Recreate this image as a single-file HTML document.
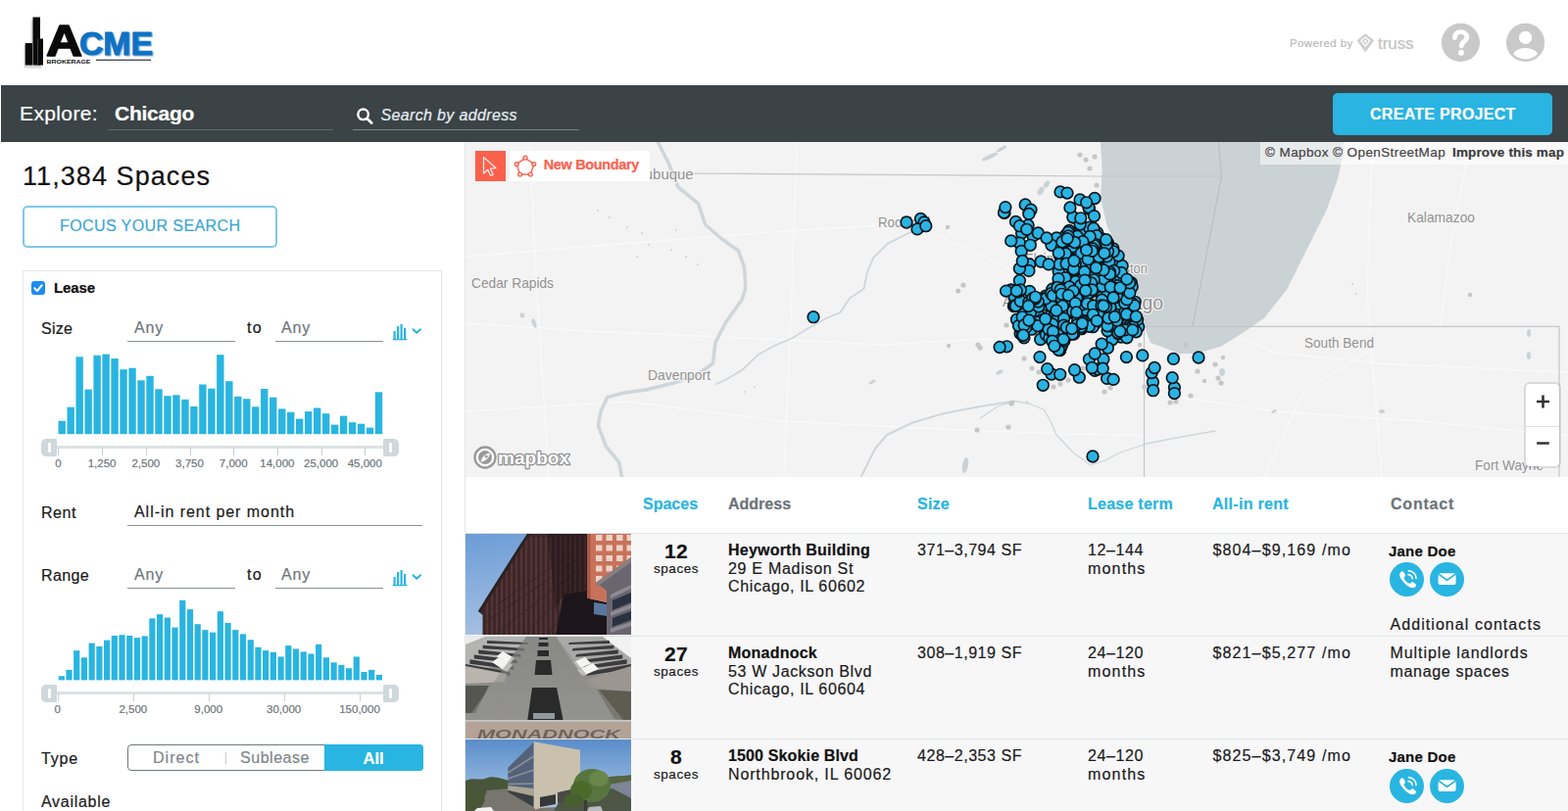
<!DOCTYPE html>
<html lang="en"><head><meta charset="utf-8"><title>Explore Chicago</title>
<style>
html,body{margin:0;padding:0;}
body{width:1600px;height:828px;overflow:hidden;background:#fff;font-family:"Liberation Sans", sans-serif;position:relative;}
.t{position:absolute;white-space:pre;-webkit-text-stroke:0.2px currentColor;}
.a{position:absolute;}

#bar{left:1px;top:87px;width:1599px;height:57.5px;background:#3b4346;}
#create{left:1360px;top:95px;width:224px;height:43px;background:#29b4e2;border-radius:5px;}
.ul{position:absolute;height:1.6px;}

#lp-border{left:474px;top:145px;width:1px;height:683px;background:#e4e7e9;}
#focus{left:23px;top:210px;width:256px;height:39px;border:2px solid #7fc8e4;border-radius:5px;}
#fbox{left:23px;top:276px;width:426px;height:600px;border:1px solid #e3e7ea;}
.iul{position:absolute;height:1.3px;background:#8a9195;}
.tick{position:absolute;width:1px;background:#c9cfd2;}
.hd{position:absolute;width:16px;height:18px;background:#cfd8dc;border-radius:3px;}
.hd i{position:absolute;left:6.5px;top:4px;width:3px;height:10px;background:#fff;border-radius:1px;}
.trk{position:absolute;height:3px;background:#dde2e4;}

#map{left:475px;top:145px;width:1125px;height:342px;overflow:hidden;background:#f3f3f3;}
#map text{font-family:"Liberation Sans",sans-serif;}

.row{position:absolute;left:475px;width:1125px;background:#f7f7f8;border-top:1px solid #e2e5e8;}
.ic{position:absolute;width:35px;height:35px;border-radius:50%;background:#29b5e1;}

</style></head><body>

<div class="a" id="logo" style="left:18px;top:14px;width:150px;height:60px;">
<svg width="150" height="60" viewBox="0 0 150 60">
 <g fill="#c9c9c9" opacity=".7" transform="translate(-1.5,1.5)"><rect x="15" y="5" width="8" height="49"/><rect x="8" y="30" width="8" height="24"/><rect x="21" y="25" width="5" height="29"/></g>
 <rect x="15.5" y="3.5" width="7.5" height="49" fill="#0a0a0a"/>
 <rect x="7.7" y="30" width="7.3" height="22.5" fill="#0a0a0a"/>
 <rect x="20.6" y="25.5" width="5.4" height="27" fill="#0a0a0a"/><rect x="20" y="25.5" width=".7" height="27" fill="#555"/>
 <text x="29" y="43" font-family="Liberation Sans, sans-serif" font-weight="700" font-size="45" fill="#c4c4c4" transform="translate(1.2,1.2)" textLength="37" lengthAdjust="spacingAndGlyphs">A</text>
 <text x="29" y="43" font-family="Liberation Sans, sans-serif" font-weight="700" font-size="45" fill="#0a0a0a" stroke="#0a0a0a" stroke-width="1.6" stroke-linejoin="round" textLength="37" lengthAdjust="spacingAndGlyphs">A</text>
 <text x="63" y="41.5" font-family="Liberation Sans, sans-serif" font-weight="700" font-size="32.5" fill="#9db9d6" stroke="#9db9d6" stroke-width="1" transform="translate(1.2,1.2)" textLength="75" lengthAdjust="spacingAndGlyphs">CME</text>
 <text x="63" y="41.5" font-family="Liberation Sans, sans-serif" font-weight="700" font-size="32.5" fill="#0e72c4" stroke="#0e72c4" stroke-width="1" stroke-linejoin="round" textLength="75" lengthAdjust="spacingAndGlyphs">CME</text>
 <text x="29.5" y="50.5" font-family="Liberation Sans, sans-serif" font-weight="700" font-size="5.6" fill="#111" textLength="45" lengthAdjust="spacingAndGlyphs">BROKERAGE</text>
 <rect x="80" y="46.6" width="56" height="1.4" fill="#4a4f57"/>
</svg></div>
<div class="a" id="bar"></div>
<div class="ul" style="left:110px;top:131.5px;width:230px;background:#5d666a;"></div>
<div class="ul" style="left:360px;top:131.5px;width:231px;background:#7a8387;"></div>
<svg class="a" style="left:362px;top:108px" width="20" height="20" viewBox="0 0 20 20"><circle cx="8.6" cy="8.8" r="5.3" fill="none" stroke="#fff" stroke-width="2.4"/><path d="M12.6 12.9 L17.2 17.5" stroke="#fff" stroke-width="2.8" stroke-linecap="round"/></svg>
<div class="a" id="create"></div>
<!-- powered by truss -->
<svg class="a" style="left:1383px;top:33px" width="21" height="22" viewBox="0 0 21 22"><path d="M10.2 1.2 L19.2 8.2 L10.2 20.6 L1.4 8.2 Z" fill="#cfcfcf"/><path d="M10.2 5 L14.6 8.6 L10.2 14.2 L5.8 8.6 Z" fill="none" stroke="#fff" stroke-width="1.3"/><circle cx="10.2" cy="9.2" r="1.3" fill="#fff"/></svg>
<svg class="a" style="left:1470px;top:23px" width="41" height="41" viewBox="0 0 41 41"><circle cx="20.4" cy="20.4" r="19.6" fill="#c9c9c9"/><path d="M14.4 15.6 C14.4 11.4 17.2 9.6 20.6 9.6 C24.2 9.6 26.8 11.6 26.8 14.8 C26.8 19.4 21.2 19.2 21.2 24" fill="none" stroke="#fff" stroke-width="4.8" stroke-linecap="round"/><circle cx="21" cy="30.8" r="3" fill="#fff"/></svg>
<svg class="a" style="left:1536px;top:23px" width="41" height="41" viewBox="0 0 41 41"><defs><clipPath id="uc"><circle cx="20.6" cy="20.4" r="17"/></clipPath></defs><circle cx="20.6" cy="20.4" r="19.6" fill="#c9c9c9"/><circle cx="20.6" cy="15.4" r="6.6" fill="#fff"/><ellipse cx="20.6" cy="33.5" rx="12.6" ry="7.4" fill="#fff" clip-path="url(#uc)"/></svg>


<div class="a" id="lp-border"></div>
<div class="a" id="focus"></div>
<div class="a" id="fbox"></div>
<svg class="a" style="left:32px;top:287px" width="14" height="14" viewBox="0 0 14 14"><rect x="0" y="0" width="14" height="14" rx="3" fill="#1a8cf0"/><path d="M3.2 7.2 L6 10 L10.8 4.2" fill="none" stroke="#fff" stroke-width="2" stroke-linecap="round" stroke-linejoin="round"/></svg>
<div class="iul" style="left:130px;top:348px;width:110px"></div>
<div class="iul" style="left:280.5px;top:348px;width:110px"></div>
<div class="iul" style="left:130px;top:535.5px;width:301px"></div>
<div class="iul" style="left:130px;top:599.5px;width:110px"></div>
<div class="iul" style="left:280.5px;top:599.5px;width:110px"></div>
<svg class="a" style="left:401px;top:329.5px" width="32" height="18" viewBox="0 0 32 18"><g fill="#29b5e1"><rect x="0.5" y="8" width="2.2" height="8"/><rect x="4" y="3" width="2.2" height="13"/><rect x="7.5" y="1" width="2.2" height="15"/><rect x="11" y="5" width="2.2" height="11"/><rect x="0" y="16" width="14.5" height="1.3"/></g><path d="M20.5 6.2 L24.2 9.8 L28 6.2" fill="none" stroke="#29b5e1" stroke-width="2" stroke-linecap="round" stroke-linejoin="round"/></svg>
<svg class="a" style="left:401px;top:581px" width="32" height="18" viewBox="0 0 32 18"><g fill="#29b5e1"><rect x="0.5" y="8" width="2.2" height="8"/><rect x="4" y="3" width="2.2" height="13"/><rect x="7.5" y="1" width="2.2" height="15"/><rect x="11" y="5" width="2.2" height="11"/><rect x="0" y="16" width="14.5" height="1.3"/></g><path d="M20.5 6.2 L24.2 9.8 L28 6.2" fill="none" stroke="#29b5e1" stroke-width="2" stroke-linecap="round" stroke-linejoin="round"/></svg>
<svg class="a" style="left:0;top:0" width="474" height="828"><g fill="#29b5e1"><rect x="59.50" y="429.70" width="7.4" height="13.50"/><rect x="68.48" y="415.60" width="7.4" height="27.60"/><rect x="77.46" y="364.29" width="7.4" height="78.91"/><rect x="86.44" y="397.60" width="7.4" height="45.60"/><rect x="95.42" y="362.79" width="7.4" height="80.41"/><rect x="104.40" y="361.59" width="7.4" height="81.61"/><rect x="113.38" y="366.09" width="7.4" height="77.11"/><rect x="122.36" y="377.19" width="7.4" height="66.01"/><rect x="131.34" y="375.69" width="7.4" height="67.51"/><rect x="140.32" y="388.29" width="7.4" height="54.91"/><rect x="149.31" y="383.79" width="7.4" height="59.41"/><rect x="158.29" y="397.30" width="7.4" height="45.90"/><rect x="167.27" y="404.20" width="7.4" height="39.00"/><rect x="176.25" y="403.30" width="7.4" height="39.90"/><rect x="185.23" y="407.80" width="7.4" height="35.40"/><rect x="194.21" y="415.00" width="7.4" height="28.20"/><rect x="203.19" y="392.49" width="7.4" height="50.71"/><rect x="212.17" y="396.70" width="7.4" height="46.50"/><rect x="221.15" y="362.19" width="7.4" height="81.01"/><rect x="230.13" y="389.19" width="7.4" height="54.01"/><rect x="239.11" y="404.80" width="7.4" height="38.40"/><rect x="248.09" y="407.20" width="7.4" height="36.00"/><rect x="257.07" y="415.30" width="7.4" height="27.90"/><rect x="266.05" y="397.00" width="7.4" height="46.20"/><rect x="275.03" y="405.70" width="7.4" height="37.50"/><rect x="284.01" y="417.40" width="7.4" height="25.80"/><rect x="292.99" y="420.70" width="7.4" height="22.50"/><rect x="301.98" y="427.60" width="7.4" height="15.60"/><rect x="310.96" y="420.10" width="7.4" height="23.10"/><rect x="319.94" y="416.50" width="7.4" height="26.70"/><rect x="328.92" y="422.20" width="7.4" height="21.00"/><rect x="337.90" y="433.60" width="7.4" height="9.60"/><rect x="346.88" y="424.60" width="7.4" height="18.60"/><rect x="355.86" y="431.20" width="7.4" height="12.00"/><rect x="364.84" y="432.70" width="7.4" height="10.50"/><rect x="373.82" y="436.60" width="7.4" height="6.60"/><rect x="382.80" y="400.30" width="7.4" height="42.90"/><rect x="59.70" y="690.20" width="6.2" height="4.20"/><rect x="67.42" y="683.89" width="6.2" height="10.51"/><rect x="75.13" y="664.14" width="6.2" height="30.26"/><rect x="82.85" y="671.28" width="6.2" height="23.12"/><rect x="90.57" y="656.57" width="6.2" height="37.83"/><rect x="98.28" y="659.93" width="6.2" height="34.47"/><rect x="106.00" y="653.63" width="6.2" height="40.77"/><rect x="113.72" y="649.00" width="6.2" height="45.40"/><rect x="121.43" y="648.16" width="6.2" height="46.24"/><rect x="129.15" y="649.00" width="6.2" height="45.40"/><rect x="136.87" y="651.10" width="6.2" height="43.30"/><rect x="144.58" y="649.42" width="6.2" height="44.98"/><rect x="152.30" y="631.35" width="6.2" height="63.05"/><rect x="160.02" y="627.14" width="6.2" height="67.26"/><rect x="167.73" y="630.51" width="6.2" height="63.89"/><rect x="175.45" y="640.60" width="6.2" height="53.80"/><rect x="183.17" y="612.85" width="6.2" height="81.55"/><rect x="190.88" y="622.10" width="6.2" height="72.30"/><rect x="198.60" y="637.23" width="6.2" height="57.17"/><rect x="206.32" y="643.12" width="6.2" height="51.28"/><rect x="214.03" y="645.64" width="6.2" height="48.76"/><rect x="221.75" y="624.20" width="6.2" height="70.20"/><rect x="229.47" y="635.97" width="6.2" height="58.43"/><rect x="237.18" y="643.12" width="6.2" height="51.28"/><rect x="244.90" y="647.32" width="6.2" height="47.08"/><rect x="252.62" y="653.21" width="6.2" height="41.19"/><rect x="260.33" y="660.77" width="6.2" height="33.63"/><rect x="268.05" y="664.14" width="6.2" height="30.26"/><rect x="275.77" y="665.82" width="6.2" height="28.58"/><rect x="283.48" y="670.44" width="6.2" height="23.96"/><rect x="291.20" y="659.09" width="6.2" height="35.31"/><rect x="298.92" y="662.45" width="6.2" height="31.95"/><rect x="306.63" y="665.40" width="6.2" height="29.00"/><rect x="314.35" y="667.50" width="6.2" height="26.90"/><rect x="322.07" y="657.83" width="6.2" height="36.57"/><rect x="329.78" y="671.28" width="6.2" height="23.12"/><rect x="337.50" y="676.33" width="6.2" height="18.07"/><rect x="345.22" y="678.85" width="6.2" height="15.55"/><rect x="352.93" y="682.21" width="6.2" height="12.19"/><rect x="360.65" y="670.44" width="6.2" height="23.96"/><rect x="368.37" y="685.99" width="6.2" height="8.41"/><rect x="376.08" y="683.89" width="6.2" height="10.51"/><rect x="383.80" y="688.94" width="6.2" height="5.46"/></g></svg>
<div class="trk" style="left:50px;top:455px;width:350px"></div>
<div class="trk" style="left:50px;top:706px;width:350px"></div>
<div class="tick" style="left:59.4px;top:457px;height:8px"></div><div class="tick" style="left:104.1px;top:457px;height:8px"></div><div class="tick" style="left:148.8px;top:457px;height:8px"></div><div class="tick" style="left:193.5px;top:457px;height:8px"></div><div class="tick" style="left:238.2px;top:457px;height:8px"></div><div class="tick" style="left:282.9px;top:457px;height:8px"></div><div class="tick" style="left:327.6px;top:457px;height:8px"></div><div class="tick" style="left:372.3px;top:457px;height:8px"></div><div class="tick" style="left:58.8px;top:708px;height:8px"></div><div class="tick" style="left:135.8px;top:708px;height:8px"></div><div class="tick" style="left:212.7px;top:708px;height:8px"></div><div class="tick" style="left:289.6px;top:708px;height:8px"></div><div class="tick" style="left:367.0px;top:708px;height:8px"></div>
<div class="hd" style="left:42px;top:447.5px;border-radius:5px 1px 1px 5px"><i></i></div>
<div class="hd" style="left:390.5px;top:447.5px;border-radius:1px 5px 5px 1px"><i></i></div>
<div class="hd" style="left:42px;top:698.5px;border-radius:5px 1px 1px 5px"><i></i></div>
<div class="hd" style="left:390.5px;top:698.5px;border-radius:1px 5px 5px 1px"><i></i></div>
<div class="a" style="left:130px;top:760px;width:300px;height:25px;border:1px solid #6f787c;border-radius:4px;"></div>
<div class="a" style="left:331px;top:760px;width:100.5px;height:27px;background:#29b5e1;border-radius:0 4px 4px 0;"></div>
<div class="a" style="left:230px;top:768px;width:1px;height:12px;background:#c5cbce;"></div>


<div class="a" id="map">
<svg width="1125" height="342" viewBox="0 0 1125 342">
<g fill="none" stroke="#f9f9f9" stroke-width="1.3"><polyline points="0.0,185.0 125.0,193.0 285.0,200.0 425.0,207.0 555.0,200.0"/><polyline points="0.0,117.0 145.0,105.0 325.0,91.0 455.0,83.0"/><polyline points="65.0,0.0 73.0,155.0 85.0,342.0"/><polyline points="338.0,0.0 333.0,155.0 325.0,342.0"/><polyline points="765.0,188.0 825.0,215.0 945.0,227.0 1125.0,235.0"/><polyline points="925.0,0.0 920.0,155.0 935.0,342.0"/><polyline points="695.0,255.0 825.0,275.0 975.0,285.0 1125.0,300.0"/><polyline points="455.0,83.0 525.0,115.0 585.0,145.0"/><polyline points="815.0,342.0 855.0,255.0 925.0,211.0"/><polyline points="0.0,275.0 165.0,265.0 325.0,285.0 525.0,295.0 695.0,300.0"/><polyline points="1025.0,0.0 1005.0,105.0 995.0,188.0"/></g>
<polygon points="648.0,0.0 649.6,29.0 648.0,58.0 655.0,87.0 670.0,116.0 681.5,145.0 690.0,174.0 695.0,195.0 699.0,205.0 710.5,209.0 728.0,216.0 745.0,216.0 771.0,208.7 794.5,194.0 815.0,179.7 838.0,150.7 852.5,121.7 867.0,92.8 878.6,69.6 890.0,37.7 894.6,17.4 896.0,0.0" fill="#cbd2d6"/>
<g fill="#cbd2d6"><ellipse cx="535" cy="15" rx="9" ry="2.2" transform="rotate(-25 535 15)"/><ellipse cx="547" cy="7" rx="6" ry="1.8" transform="rotate(-30 547 7)"/><ellipse cx="587" cy="50" rx="3" ry="5" transform="rotate(30 587 50)"/><ellipse cx="593" cy="43" rx="2.5" ry="4" transform="rotate(30 593 43)"/><ellipse cx="58" cy="177" rx="2.5" ry="2.5" transform="rotate(0 58 177)"/><ellipse cx="70" cy="185" rx="2" ry="5" transform="rotate(-20 70 185)"/><ellipse cx="415" cy="245" rx="4" ry="1.5" transform="rotate(-30 415 245)"/><ellipse cx="880" cy="42" rx="4" ry="1.5" transform="rotate(-30 880 42)"/><ellipse cx="845" cy="27" rx="3" ry="1.2" transform="rotate(-30 845 27)"/><ellipse cx="825" cy="120" rx="3" ry="1.2" transform="rotate(-30 825 120)"/><ellipse cx="1085" cy="195" rx="2" ry="4" transform="rotate(0 1085 195)"/><ellipse cx="1085" cy="218" rx="2" ry="4" transform="rotate(0 1085 218)"/><ellipse cx="825" cy="275" rx="3" ry="1.5" transform="rotate(-30 825 275)"/><ellipse cx="935" cy="275" rx="3" ry="2" transform="rotate(0 935 275)"/><ellipse cx="545" cy="235" rx="4" ry="2" transform="rotate(-30 545 235)"/><ellipse cx="510" cy="330" rx="3" ry="8" transform="rotate(10 510 330)"/><ellipse cx="1012" cy="15" rx="2" ry="4" transform="rotate(-20 1012 15)"/><ellipse cx="772" cy="235" rx="3" ry="4" transform="rotate(0 772 235)"/><circle cx="135" cy="70" r="1"/><circle cx="147" cy="77" r="1"/><circle cx="165" cy="87" r="1"/><circle cx="180" cy="93" r="1"/><circle cx="187" cy="105" r="1"/><circle cx="175" cy="117" r="1"/><circle cx="210" cy="110" r="1"/><circle cx="225" cy="117" r="1"/><circle cx="237" cy="125" r="1"/><circle cx="215" cy="90" r="1"/><circle cx="573" cy="265" r="1"/><circle cx="285" cy="255" r="1"/><circle cx="295" cy="250" r="1"/><circle cx="905" cy="145" r="1"/><circle cx="909" cy="155" r="1"/></g>
<g fill="none" stroke="#cfd6da" stroke-linejoin="round" stroke-linecap="round">
<polyline points="196.4,0.0 207.3,21.7 217.0,46.0 237.5,62.8 244.7,84.5 261.6,99.0 278.5,111.0 284.6,128.0 285.8,149.7 282.0,161.0 266.0,183.5 255.0,204.7 252.5,226.0 237.0,237.0 212.6,246.0 186.0,252.6 159.5,256.5 144.8,260.5 138.0,275.0 135.5,289.8 143.5,311.0 156.8,327.0 159.5,342.0" stroke-width="3.6"/>
<polyline points="462.0,88.0 450.0,94.0 430.7,103.9 416.0,118.4 410.0,132.8 406.5,149.7 392.0,159.4 382.4,174.0 368.0,180.0 348.6,190.8 334.0,200.0 315.0,208.0 299.0,217.0 282.0,233.0 265.0,243.0 256.0,247.0" stroke-width="1.8"/>
<polyline points="560.0,264.5 525.0,270.0 486.0,277.6 455.0,287.0 430.0,299.0 418.0,313.0 412.0,325.0 403.7,342.0" stroke-width="2"/>
<polyline points="525.0,282.0 543.0,270.0 560.0,264.6 575.0,267.0 590.0,273.0 597.0,285.0 603.0,299.0 620.0,317.0 638.0,330.0 653.0,325.0 668.0,317.0 695.0,308.0 725.0,302.0 765.0,295.0" stroke-width="1.3"/>
</g>
<g fill="none" stroke="#c3c6c8" stroke-width="1.2">
<polyline points="215.0,32.0 425.0,33.3 648.0,35.0 771.4,35.0"/>
<polyline points="768.5,0.0 771.4,35.0 742.0,188.4" stroke="#b4bcc0" stroke-width="1"/>
<polyline points="692.5,342.0 692.5,188.4 1116.0,188.4 1116.0,342.0"/>
</g>
<g fill="#c6c6c6"><circle cx="642.0" cy="15.0" r="2.6"/><circle cx="633.0" cy="18.0" r="2.6"/><circle cx="627.0" cy="13.0" r="2.6"/><circle cx="637.0" cy="27.0" r="2.6"/><circle cx="644.0" cy="44.0" r="2.6"/><circle cx="552.0" cy="187.0" r="2.6"/><circle cx="562.0" cy="107.0" r="2.6"/><circle cx="594.0" cy="162.0" r="2.6"/><circle cx="600.0" cy="160.0" r="2.6"/><circle cx="508.0" cy="146.0" r="2.6"/><circle cx="502.7" cy="152.0" r="2.6"/><circle cx="523.0" cy="207.0" r="2.6"/><circle cx="525.0" cy="210.0" r="2.6"/><circle cx="557.0" cy="267.0" r="2.6"/><circle cx="554.0" cy="291.0" r="2.6"/><circle cx="765.0" cy="227.0" r="2.6"/><circle cx="768.0" cy="241.0" r="2.6"/><circle cx="771.0" cy="246.0" r="2.6"/><circle cx="747.0" cy="234.0" r="2.6"/><circle cx="740.0" cy="259.0" r="2.6"/><circle cx="725.0" cy="265.0" r="2.6"/><circle cx="719.0" cy="266.0" r="2.6"/><circle cx="578.0" cy="231.0" r="2.6"/><circle cx="585.0" cy="235.0" r="2.6"/><circle cx="593.0" cy="234.0" r="2.6"/><circle cx="600.0" cy="250.0" r="2.6"/><circle cx="607.0" cy="247.0" r="2.6"/><circle cx="615.0" cy="243.0" r="2.6"/><circle cx="623.0" cy="237.0" r="2.6"/><circle cx="630.0" cy="231.0" r="2.6"/><circle cx="645.0" cy="233.0" r="2.6"/><circle cx="657.0" cy="237.0" r="2.6"/><circle cx="665.0" cy="243.0" r="2.6"/><circle cx="658.0" cy="251.0" r="2.6"/><circle cx="652.0" cy="255.0" r="2.6"/><circle cx="570.0" cy="221.0" r="2.6"/><circle cx="735.0" cy="207.0" r="2.6"/><circle cx="700.0" cy="227.0" r="2.6"/><circle cx="693.0" cy="250.0" r="2.6"/><circle cx="522.0" cy="294.0" r="2.6"/><circle cx="610.0" cy="181.0" r="2.6"/><circle cx="492.0" cy="87.0" r="2.2"/><circle cx="493.0" cy="208.0" r="2.2"/><circle cx="558.0" cy="266.0" r="2.2"/><circle cx="688.0" cy="207.0" r="2.2"/><circle cx="773.0" cy="220.0" r="2.2"/><circle cx="754.0" cy="244.0" r="2.2"/><circle cx="1025.0" cy="156.0" r="2.2"/></g>
<text x="172.0" y="38.0" font-size="14.5" fill="#929292" font-weight="400" stroke="#f6f6f6" stroke-width="2.2" paint-order="stroke" stroke-linejoin="round" textLength="60.6" lengthAdjust="spacingAndGlyphs">Dubuque</text><text x="6.0" y="149.0" font-size="14.5" fill="#929292" font-weight="400" stroke="#f6f6f6" stroke-width="2.2" paint-order="stroke" stroke-linejoin="round" textLength="84.0" lengthAdjust="spacingAndGlyphs">Cedar Rapids</text><text x="186.0" y="243.0" font-size="14.5" fill="#929292" font-weight="400" stroke="#f6f6f6" stroke-width="2.2" paint-order="stroke" stroke-linejoin="round" textLength="64.0" lengthAdjust="spacingAndGlyphs">Davenport</text><text x="421.0" y="87.0" font-size="14.5" fill="#929292" font-weight="400" stroke="#f6f6f6" stroke-width="2.2" paint-order="stroke" stroke-linejoin="round" textLength="53.0" lengthAdjust="spacingAndGlyphs">Rockford</text><text x="961.0" y="82.0" font-size="14.5" fill="#929292" font-weight="400" stroke="#f6f6f6" stroke-width="2.2" paint-order="stroke" stroke-linejoin="round" textLength="69.0" lengthAdjust="spacingAndGlyphs">Kalamazoo</text><text x="856.0" y="209.5" font-size="14.5" fill="#929292" font-weight="400" stroke="#f6f6f6" stroke-width="2.2" paint-order="stroke" stroke-linejoin="round" textLength="71.0" lengthAdjust="spacingAndGlyphs">South Bend</text><text x="1030.0" y="334.5" font-size="14.5" fill="#929292" font-weight="400" stroke="#f6f6f6" stroke-width="2.2" paint-order="stroke" stroke-linejoin="round" textLength="70.0" lengthAdjust="spacingAndGlyphs">Fort Wayne</text><text x="641.0" y="171.0" font-size="19.5" fill="#929292" font-weight="400" stroke="#f6f6f6" stroke-width="2.2" paint-order="stroke" stroke-linejoin="round" textLength="71.0" lengthAdjust="spacingAndGlyphs">Chicago</text><text x="642.0" y="133.5" font-size="14.5" fill="#929292" font-weight="400" stroke="#f6f6f6" stroke-width="2.2" paint-order="stroke" stroke-linejoin="round" textLength="54.0" lengthAdjust="spacingAndGlyphs">Evanston</text><text x="548.0" y="167.5" font-size="14.5" fill="#929292" font-weight="400" stroke="#f6f6f6" stroke-width="2.2" paint-order="stroke" stroke-linejoin="round" textLength="39.0" lengthAdjust="spacingAndGlyphs">Aurora</text><text x="571.0" y="124.0" font-size="14.5" fill="#929292" font-weight="400" stroke="#f6f6f6" stroke-width="2.2" paint-order="stroke" stroke-linejoin="round" textLength="29.0" lengthAdjust="spacingAndGlyphs">Elgin</text>
<g fill="#2ab3e3" stroke="#08161c" stroke-width="1.7"><circle cx="686.7" cy="188.8" r="5.8"/><circle cx="625.7" cy="106.4" r="5.8"/><circle cx="608.1" cy="176.2" r="5.8"/><circle cx="576.8" cy="165.3" r="5.8"/><circle cx="644.7" cy="92.6" r="5.8"/><circle cx="591.3" cy="193.3" r="5.8"/><circle cx="586.7" cy="201.5" r="5.8"/><circle cx="606.6" cy="212.5" r="5.8"/><circle cx="602.9" cy="189.0" r="5.8"/><circle cx="598.8" cy="150.2" r="5.8"/><circle cx="661.1" cy="176.5" r="5.8"/><circle cx="556.7" cy="150.9" r="5.8"/><circle cx="604.7" cy="145.7" r="5.8"/><circle cx="592.0" cy="166.1" r="5.8"/><circle cx="572.1" cy="176.7" r="5.8"/><circle cx="603.9" cy="185.6" r="5.8"/><circle cx="607.5" cy="147.3" r="5.8"/><circle cx="669.3" cy="150.6" r="5.8"/><circle cx="642.2" cy="233.4" r="5.8"/><circle cx="649.5" cy="161.5" r="5.8"/><circle cx="608.9" cy="170.5" r="5.8"/><circle cx="603.7" cy="209.4" r="5.8"/><circle cx="667.8" cy="137.7" r="5.8"/><circle cx="611.3" cy="100.6" r="5.8"/><circle cx="628.6" cy="132.2" r="5.8"/><circle cx="675.6" cy="172.2" r="5.8"/><circle cx="619.4" cy="102.2" r="5.8"/><circle cx="642.1" cy="185.9" r="5.8"/><circle cx="628.5" cy="190.7" r="5.8"/><circle cx="594.8" cy="162.8" r="5.8"/><circle cx="633.4" cy="104.6" r="5.8"/><circle cx="643.9" cy="127.6" r="5.8"/><circle cx="621.6" cy="145.3" r="5.8"/><circle cx="672.7" cy="192.0" r="5.8"/><circle cx="666.4" cy="167.0" r="5.8"/><circle cx="597.1" cy="195.6" r="5.8"/><circle cx="638.6" cy="153.0" r="5.8"/><circle cx="748.0" cy="220.0" r="5.8"/><circle cx="629.3" cy="125.8" r="5.8"/><circle cx="646.7" cy="101.8" r="5.8"/><circle cx="636.4" cy="68.3" r="5.8"/><circle cx="616.0" cy="90.5" r="5.8"/><circle cx="566.9" cy="194.8" r="5.8"/><circle cx="618.7" cy="147.2" r="5.8"/><circle cx="637.4" cy="137.7" r="5.8"/><circle cx="723.4" cy="250.8" r="5.8"/><circle cx="639.5" cy="135.6" r="5.8"/><circle cx="620.5" cy="77.0" r="5.8"/><circle cx="668.8" cy="199.0" r="5.8"/><circle cx="580.0" cy="187.6" r="5.8"/><circle cx="572.5" cy="169.9" r="5.8"/><circle cx="660.0" cy="164.5" r="5.8"/><circle cx="605.9" cy="203.0" r="5.8"/><circle cx="679.4" cy="143.6" r="5.8"/><circle cx="647.4" cy="175.5" r="5.8"/><circle cx="664.3" cy="154.5" r="5.8"/><circle cx="564.7" cy="166.7" r="5.8"/><circle cx="674.1" cy="152.2" r="5.8"/><circle cx="627.0" cy="89.3" r="5.8"/><circle cx="643.4" cy="118.6" r="5.8"/><circle cx="574.6" cy="175.5" r="5.8"/><circle cx="636.0" cy="173.3" r="5.8"/><circle cx="624.7" cy="184.4" r="5.8"/><circle cx="677.8" cy="150.7" r="5.8"/><circle cx="627.2" cy="93.1" r="5.8"/><circle cx="608.9" cy="163.8" r="5.8"/><circle cx="671.2" cy="141.5" r="5.8"/><circle cx="560.9" cy="156.2" r="5.8"/><circle cx="639.1" cy="119.4" r="5.8"/><circle cx="616.1" cy="171.3" r="5.8"/><circle cx="658.9" cy="186.3" r="5.8"/><circle cx="565.9" cy="150.9" r="5.8"/><circle cx="621.8" cy="175.4" r="5.8"/><circle cx="620.5" cy="137.9" r="5.8"/><circle cx="607.5" cy="147.9" r="5.8"/><circle cx="596.4" cy="195.7" r="5.8"/><circle cx="614.8" cy="105.0" r="5.8"/><circle cx="599.5" cy="196.4" r="5.8"/><circle cx="630.0" cy="129.1" r="5.8"/><circle cx="630.6" cy="176.6" r="5.8"/><circle cx="630.0" cy="117.4" r="5.8"/><circle cx="656.3" cy="140.6" r="5.8"/><circle cx="619.1" cy="130.5" r="5.8"/><circle cx="600.4" cy="157.1" r="5.8"/><circle cx="612.6" cy="118.8" r="5.8"/><circle cx="621.8" cy="167.7" r="5.8"/><circle cx="571.2" cy="64.0" r="5.8"/><circle cx="655.3" cy="116.2" r="5.8"/><circle cx="681.5" cy="188.4" r="5.8"/><circle cx="701.4" cy="245.0" r="5.8"/><circle cx="622.0" cy="129.2" r="5.8"/><circle cx="562.5" cy="181.2" r="5.8"/><circle cx="650.9" cy="221.8" r="5.8"/><circle cx="636.4" cy="221.8" r="5.8"/><circle cx="656.8" cy="142.5" r="5.8"/><circle cx="626.3" cy="240.2" r="5.8"/><circle cx="607.7" cy="184.8" r="5.8"/><circle cx="550.0" cy="72.4" r="5.8"/><circle cx="604.3" cy="154.8" r="5.8"/><circle cx="591.9" cy="157.1" r="5.8"/><circle cx="628.5" cy="144.4" r="5.8"/><circle cx="649.0" cy="147.6" r="5.8"/><circle cx="556.7" cy="151.5" r="5.8"/><circle cx="682.1" cy="183.8" r="5.8"/><circle cx="559.4" cy="167.5" r="5.8"/><circle cx="605.7" cy="182.4" r="5.8"/><circle cx="616.2" cy="193.8" r="5.8"/><circle cx="666.3" cy="169.7" r="5.8"/><circle cx="677.6" cy="192.7" r="5.8"/><circle cx="629.3" cy="112.4" r="5.8"/><circle cx="598.0" cy="237.0" r="5.8"/><circle cx="614.0" cy="142.2" r="5.8"/><circle cx="608.5" cy="141.0" r="5.8"/><circle cx="564.0" cy="155.1" r="5.8"/><circle cx="653.8" cy="155.7" r="5.8"/><circle cx="575.6" cy="124.9" r="5.8"/><circle cx="654.6" cy="241.4" r="5.8"/><circle cx="660.8" cy="108.8" r="5.8"/><circle cx="641.8" cy="119.0" r="5.8"/><circle cx="560.2" cy="158.3" r="5.8"/><circle cx="579.2" cy="95.9" r="5.8"/><circle cx="560.5" cy="167.0" r="5.8"/><circle cx="666.5" cy="158.4" r="5.8"/><circle cx="561.5" cy="167.3" r="5.8"/><circle cx="663.2" cy="196.6" r="5.8"/><circle cx="679.9" cy="188.1" r="5.8"/><circle cx="701.7" cy="253.7" r="5.8"/><circle cx="621.0" cy="168.0" r="5.8"/><circle cx="605.2" cy="132.2" r="5.8"/><circle cx="575.0" cy="72.4" r="5.8"/><circle cx="681.5" cy="163.7" r="5.8"/><circle cx="584.3" cy="93.0" r="5.8"/><circle cx="664.7" cy="183.5" r="5.8"/><circle cx="655.7" cy="103.9" r="5.8"/><circle cx="672.2" cy="192.7" r="5.8"/><circle cx="636.4" cy="87.2" r="5.8"/><circle cx="584.3" cy="178.9" r="5.8"/><circle cx="659.9" cy="201.8" r="5.8"/><circle cx="683.2" cy="163.3" r="5.8"/><circle cx="609.3" cy="203.8" r="5.8"/><circle cx="655.0" cy="102.2" r="5.8"/><circle cx="668.3" cy="129.2" r="5.8"/><circle cx="690.8" cy="217.9" r="5.8"/><circle cx="567.6" cy="93.0" r="5.8"/><circle cx="578.7" cy="182.5" r="5.8"/><circle cx="610.4" cy="104.6" r="5.8"/><circle cx="618.4" cy="109.1" r="5.8"/><circle cx="622.0" cy="110.4" r="5.8"/><circle cx="608.0" cy="112.3" r="5.8"/><circle cx="592.4" cy="196.8" r="5.8"/><circle cx="549.5" cy="72.0" r="5.8"/><circle cx="721.2" cy="240.7" r="5.8"/><circle cx="619.8" cy="76.7" r="5.8"/><circle cx="464.5" cy="78.5" r="5.8"/><circle cx="597.0" cy="177.2" r="5.8"/><circle cx="674.1" cy="150.9" r="5.8"/><circle cx="657.5" cy="144.3" r="5.8"/><circle cx="663.3" cy="150.9" r="5.8"/><circle cx="645.1" cy="141.4" r="5.8"/><circle cx="574.9" cy="131.4" r="5.8"/><circle cx="600.1" cy="158.4" r="5.8"/><circle cx="671.1" cy="144.5" r="5.8"/><circle cx="606.7" cy="212.4" r="5.8"/><circle cx="583.2" cy="161.9" r="5.8"/><circle cx="680.6" cy="189.8" r="5.8"/><circle cx="643.4" cy="111.3" r="5.8"/><circle cx="566.1" cy="195.5" r="5.8"/><circle cx="613.6" cy="155.0" r="5.8"/><circle cx="668.4" cy="187.1" r="5.8"/><circle cx="605.9" cy="109.5" r="5.8"/><circle cx="663.7" cy="141.7" r="5.8"/><circle cx="624.9" cy="188.0" r="5.8"/><circle cx="658.9" cy="117.0" r="5.8"/><circle cx="607.0" cy="50.9" r="5.8"/><circle cx="700.2" cy="235.6" r="5.8"/><circle cx="610.4" cy="113.3" r="5.8"/><circle cx="569.1" cy="188.4" r="5.8"/><circle cx="639.5" cy="132.2" r="5.8"/><circle cx="630.8" cy="114.7" r="5.8"/><circle cx="577.0" cy="69.1" r="5.8"/><circle cx="589.9" cy="160.0" r="5.8"/><circle cx="587.4" cy="178.8" r="5.8"/><circle cx="612.5" cy="95.2" r="5.8"/><circle cx="595.3" cy="183.7" r="5.8"/><circle cx="636.4" cy="140.1" r="5.8"/><circle cx="638.0" cy="172.7" r="5.8"/><circle cx="616.9" cy="66.9" r="5.8"/><circle cx="648.2" cy="136.7" r="5.8"/><circle cx="589.3" cy="248.3" r="5.8"/><circle cx="605.7" cy="197.7" r="5.8"/><circle cx="648.0" cy="118.3" r="5.8"/><circle cx="640.8" cy="129.0" r="5.8"/><circle cx="639.9" cy="142.2" r="5.8"/><circle cx="668.3" cy="137.7" r="5.8"/><circle cx="608.3" cy="207.2" r="5.8"/><circle cx="566.7" cy="190.6" r="5.8"/><circle cx="661.1" cy="242.4" r="5.8"/><circle cx="655.3" cy="210.2" r="5.8"/><circle cx="566.3" cy="162.5" r="5.8"/><circle cx="621.1" cy="108.6" r="5.8"/><circle cx="612.9" cy="152.3" r="5.8"/><circle cx="468.0" cy="82.0" r="5.8"/><circle cx="565.4" cy="129.2" r="5.8"/><circle cx="636.0" cy="66.7" r="5.8"/><circle cx="623.3" cy="98.3" r="5.8"/><circle cx="620.7" cy="104.8" r="5.8"/><circle cx="675.7" cy="188.4" r="5.8"/><circle cx="647.4" cy="103.7" r="5.8"/><circle cx="574.9" cy="73.4" r="5.8"/><circle cx="620.6" cy="114.4" r="5.8"/><circle cx="601.5" cy="174.3" r="5.8"/><circle cx="599.5" cy="168.5" r="5.8"/><circle cx="575.1" cy="183.8" r="5.8"/><circle cx="614.9" cy="145.2" r="5.8"/><circle cx="575.6" cy="152.4" r="5.8"/><circle cx="640.8" cy="182.0" r="5.8"/><circle cx="570.3" cy="188.8" r="5.8"/><circle cx="649.5" cy="158.0" r="5.8"/><circle cx="656.5" cy="119.1" r="5.8"/><circle cx="569.9" cy="199.8" r="5.8"/><circle cx="604.6" cy="179.1" r="5.8"/><circle cx="678.8" cy="166.0" r="5.8"/><circle cx="603.8" cy="205.9" r="5.8"/><circle cx="680.2" cy="147.7" r="5.8"/><circle cx="598.0" cy="167.6" r="5.8"/><circle cx="628.1" cy="138.9" r="5.8"/><circle cx="608.0" cy="159.5" r="5.8"/><circle cx="626.2" cy="179.0" r="5.8"/><circle cx="665.4" cy="120.5" r="5.8"/><circle cx="550.9" cy="66.6" r="5.8"/><circle cx="635.0" cy="131.4" r="5.8"/><circle cx="589.7" cy="182.2" r="5.8"/><circle cx="595.8" cy="199.9" r="5.8"/><circle cx="620.4" cy="152.6" r="5.8"/><circle cx="608.7" cy="194.9" r="5.8"/><circle cx="628.1" cy="138.2" r="5.8"/><circle cx="642.2" cy="93.0" r="5.8"/><circle cx="609.5" cy="146.6" r="5.8"/><circle cx="670.1" cy="126.4" r="5.8"/><circle cx="622.7" cy="130.6" r="5.8"/><circle cx="629.2" cy="159.5" r="5.8"/><circle cx="664.2" cy="176.4" r="5.8"/><circle cx="565.4" cy="141.5" r="5.8"/><circle cx="723.4" cy="256.6" r="5.8"/><circle cx="631.1" cy="183.6" r="5.8"/><circle cx="608.1" cy="208.1" r="5.8"/><circle cx="649.5" cy="98.8" r="5.8"/><circle cx="624.0" cy="109.6" r="5.8"/><circle cx="569.6" cy="175.8" r="5.8"/><circle cx="639.6" cy="175.5" r="5.8"/><circle cx="583.9" cy="175.4" r="5.8"/><circle cx="652.7" cy="165.7" r="5.8"/><circle cx="675.9" cy="155.5" r="5.8"/><circle cx="668.4" cy="189.0" r="5.8"/><circle cx="587.2" cy="182.0" r="5.8"/><circle cx="592.1" cy="159.9" r="5.8"/><circle cx="552.4" cy="208.8" r="5.8"/><circle cx="450.0" cy="82.0" r="5.8"/><circle cx="606.6" cy="192.7" r="5.8"/><circle cx="639.3" cy="177.8" r="5.8"/><circle cx="680.6" cy="164.9" r="5.8"/><circle cx="587.2" cy="122.0" r="5.8"/><circle cx="641.8" cy="139.3" r="5.8"/><circle cx="667.7" cy="182.3" r="5.8"/><circle cx="627.2" cy="84.1" r="5.8"/><circle cx="669.2" cy="133.5" r="5.8"/><circle cx="631.7" cy="122.3" r="5.8"/><circle cx="645.8" cy="175.4" r="5.8"/><circle cx="577.8" cy="191.2" r="5.8"/><circle cx="678.0" cy="177.0" r="5.8"/><circle cx="576.5" cy="174.2" r="5.8"/><circle cx="644.7" cy="129.9" r="5.8"/><circle cx="604.9" cy="189.7" r="5.8"/><circle cx="597.6" cy="154.6" r="5.8"/><circle cx="605.2" cy="212.3" r="5.8"/><circle cx="622.5" cy="142.4" r="5.8"/><circle cx="638.9" cy="173.7" r="5.8"/><circle cx="619.6" cy="106.9" r="5.8"/><circle cx="638.2" cy="134.4" r="5.8"/><circle cx="564.4" cy="187.6" r="5.8"/><circle cx="620.0" cy="100.8" r="5.8"/><circle cx="666.1" cy="116.1" r="5.8"/><circle cx="598.5" cy="194.1" r="5.8"/><circle cx="654.9" cy="140.4" r="5.8"/><circle cx="685.6" cy="181.4" r="5.8"/><circle cx="633.4" cy="113.1" r="5.8"/><circle cx="656.9" cy="122.4" r="5.8"/><circle cx="612.0" cy="138.6" r="5.8"/><circle cx="616.9" cy="174.1" r="5.8"/><circle cx="640.2" cy="188.7" r="5.8"/><circle cx="661.7" cy="131.4" r="5.8"/><circle cx="625.4" cy="128.0" r="5.8"/><circle cx="636.3" cy="188.3" r="5.8"/><circle cx="642.0" cy="57.5" r="5.8"/><circle cx="672.9" cy="173.5" r="5.8"/><circle cx="608.6" cy="194.0" r="5.8"/><circle cx="564.0" cy="153.1" r="5.8"/><circle cx="630.6" cy="119.6" r="5.8"/><circle cx="613.0" cy="118.5" r="5.8"/><circle cx="628.1" cy="190.6" r="5.8"/><circle cx="636.1" cy="122.5" r="5.8"/><circle cx="637.5" cy="165.9" r="5.8"/><circle cx="655.1" cy="192.8" r="5.8"/><circle cx="574.9" cy="163.2" r="5.8"/><circle cx="665.4" cy="182.1" r="5.8"/><circle cx="565.4" cy="103.1" r="5.8"/><circle cx="627.0" cy="58.9" r="5.8"/><circle cx="620.5" cy="166.3" r="5.8"/><circle cx="574.1" cy="85.0" r="5.8"/><circle cx="645.1" cy="232.0" r="5.8"/><circle cx="584.8" cy="168.1" r="5.8"/><circle cx="659.5" cy="188.1" r="5.8"/><circle cx="566.3" cy="151.0" r="5.8"/><circle cx="567.2" cy="111.4" r="5.8"/><circle cx="593.7" cy="231.7" r="5.8"/><circle cx="682.5" cy="166.9" r="5.8"/><circle cx="583.2" cy="183.9" r="5.8"/><circle cx="615.2" cy="117.7" r="5.8"/><circle cx="684.0" cy="178.4" r="5.8"/><circle cx="561.5" cy="81.4" r="5.8"/><circle cx="630.7" cy="122.0" r="5.8"/><circle cx="616.2" cy="147.9" r="5.8"/><circle cx="568.2" cy="178.8" r="5.8"/><circle cx="568.3" cy="121.5" r="5.8"/><circle cx="672.7" cy="164.6" r="5.8"/><circle cx="615.4" cy="119.1" r="5.8"/><circle cx="636.9" cy="148.3" r="5.8"/><circle cx="655.0" cy="138.1" r="5.8"/><circle cx="674.9" cy="160.9" r="5.8"/><circle cx="620.7" cy="196.1" r="5.8"/><circle cx="606.5" cy="116.1" r="5.8"/><circle cx="574.6" cy="184.2" r="5.8"/><circle cx="680.9" cy="188.7" r="5.8"/><circle cx="578.2" cy="185.3" r="5.8"/><circle cx="659.7" cy="158.1" r="5.8"/><circle cx="617.6" cy="171.1" r="5.8"/><circle cx="461.0" cy="88.9" r="5.8"/><circle cx="551.6" cy="152.1" r="5.8"/><circle cx="662.4" cy="178.7" r="5.8"/><circle cx="664.6" cy="182.2" r="5.8"/><circle cx="469.8" cy="85.7" r="5.8"/><circle cx="615.4" cy="196.8" r="5.8"/><circle cx="640.1" cy="124.9" r="5.8"/><circle cx="661.1" cy="111.8" r="5.8"/><circle cx="616.5" cy="160.5" r="5.8"/><circle cx="674.4" cy="219.6" r="5.8"/><circle cx="674.5" cy="175.9" r="5.8"/><circle cx="643.7" cy="141.5" r="5.8"/><circle cx="640.9" cy="88.2" r="5.8"/><circle cx="565.4" cy="85.7" r="5.8"/><circle cx="613.7" cy="101.0" r="5.8"/><circle cx="599.4" cy="156.8" r="5.8"/><circle cx="644.0" cy="95.7" r="5.8"/><circle cx="601.9" cy="203.2" r="5.8"/><circle cx="665.4" cy="146.6" r="5.8"/><circle cx="603.1" cy="98.0" r="5.8"/><circle cx="722.4" cy="221.4" r="5.8"/><circle cx="639.7" cy="116.7" r="5.8"/><circle cx="571.8" cy="189.4" r="5.8"/><circle cx="647.1" cy="105.8" r="5.8"/><circle cx="654.4" cy="116.8" r="5.8"/><circle cx="599.0" cy="185.9" r="5.8"/><circle cx="666.2" cy="195.7" r="5.8"/><circle cx="684.3" cy="193.8" r="5.8"/><circle cx="655.0" cy="154.9" r="5.8"/><circle cx="556.7" cy="100.9" r="5.8"/><circle cx="677.8" cy="154.1" r="5.8"/><circle cx="594.9" cy="191.1" r="5.8"/><circle cx="657.9" cy="168.5" r="5.8"/><circle cx="657.6" cy="170.3" r="5.8"/><circle cx="603.6" cy="201.4" r="5.8"/><circle cx="646.4" cy="117.2" r="5.8"/><circle cx="641.5" cy="75.6" r="5.8"/><circle cx="649.9" cy="147.3" r="5.8"/><circle cx="647.1" cy="137.0" r="5.8"/><circle cx="649.5" cy="106.0" r="5.8"/><circle cx="619.3" cy="196.0" r="5.8"/><circle cx="605.0" cy="139.6" r="5.8"/><circle cx="674.9" cy="199.8" r="5.8"/><circle cx="665.7" cy="194.8" r="5.8"/><circle cx="640.4" cy="127.2" r="5.8"/><circle cx="657.9" cy="168.7" r="5.8"/><circle cx="355.0" cy="178.7" r="5.8"/><circle cx="638.6" cy="149.3" r="5.8"/><circle cx="632.9" cy="171.2" r="5.8"/><circle cx="657.5" cy="132.8" r="5.8"/><circle cx="627.8" cy="146.4" r="5.8"/><circle cx="642.7" cy="104.5" r="5.8"/><circle cx="639.2" cy="126.6" r="5.8"/><circle cx="660.8" cy="148.6" r="5.8"/><circle cx="610.8" cy="173.1" r="5.8"/><circle cx="598.0" cy="105.3" r="5.8"/><circle cx="610.6" cy="180.1" r="5.8"/><circle cx="628.3" cy="113.4" r="5.8"/><circle cx="610.8" cy="203.0" r="5.8"/><circle cx="651.5" cy="139.8" r="5.8"/><circle cx="576.3" cy="105.3" r="5.8"/><circle cx="608.4" cy="160.1" r="5.8"/><circle cx="615.0" cy="92.2" r="5.8"/><circle cx="631.6" cy="132.5" r="5.8"/><circle cx="593.0" cy="98.0" r="5.8"/><circle cx="584.0" cy="187.8" r="5.8"/><circle cx="604.0" cy="148.5" r="5.8"/><circle cx="628.3" cy="188.7" r="5.8"/><circle cx="624.2" cy="96.3" r="5.8"/><circle cx="568.3" cy="197.3" r="5.8"/><circle cx="615.4" cy="98.8" r="5.8"/><circle cx="591.7" cy="180.8" r="5.8"/><circle cx="572.7" cy="89.3" r="5.8"/><circle cx="633.6" cy="61.8" r="5.8"/><circle cx="641.2" cy="140.8" r="5.8"/><circle cx="606.0" cy="124.9" r="5.8"/><circle cx="677.6" cy="143.9" r="5.8"/><circle cx="676.2" cy="190.7" r="5.8"/><circle cx="649.2" cy="206.2" r="5.8"/><circle cx="615.4" cy="156.5" r="5.8"/><circle cx="570.1" cy="186.9" r="5.8"/><circle cx="634.9" cy="154.8" r="5.8"/><circle cx="545.1" cy="209.5" r="5.8"/><circle cx="703.1" cy="230.5" r="5.8"/><circle cx="628.8" cy="166.0" r="5.8"/><circle cx="615.8" cy="124.8" r="5.8"/><circle cx="627.8" cy="77.8" r="5.8"/><circle cx="607.1" cy="151.0" r="5.8"/><circle cx="650.2" cy="231.2" r="5.8"/><circle cx="653.6" cy="168.3" r="5.8"/><circle cx="599.5" cy="193.5" r="5.8"/><circle cx="654.4" cy="104.8" r="5.8"/><circle cx="578.6" cy="159.6" r="5.8"/><circle cx="608.2" cy="108.1" r="5.8"/><circle cx="635.2" cy="119.7" r="5.8"/><circle cx="610.1" cy="201.4" r="5.8"/><circle cx="652.9" cy="110.1" r="5.8"/><circle cx="657.4" cy="134.9" r="5.8"/><circle cx="584.3" cy="163.1" r="5.8"/><circle cx="634.4" cy="164.9" r="5.8"/><circle cx="623.7" cy="159.5" r="5.8"/><circle cx="581.1" cy="160.0" r="5.8"/><circle cx="639.3" cy="230.5" r="5.8"/><circle cx="622.3" cy="124.2" r="5.8"/><circle cx="638.6" cy="143.9" r="5.8"/><circle cx="641.7" cy="105.8" r="5.8"/><circle cx="640.6" cy="167.2" r="5.8"/><circle cx="606.7" cy="237.3" r="5.8"/><circle cx="672.9" cy="191.9" r="5.8"/><circle cx="658.2" cy="148.0" r="5.8"/><circle cx="661.0" cy="159.0" r="5.8"/><circle cx="610.5" cy="187.1" r="5.8"/><circle cx="614.0" cy="52.1" r="5.8"/><circle cx="574.9" cy="182.0" r="5.8"/><circle cx="655.0" cy="187.8" r="5.8"/><circle cx="667.8" cy="193.3" r="5.8"/><circle cx="569.1" cy="197.2" r="5.8"/><circle cx="637.1" cy="96.5" r="5.8"/><circle cx="649.3" cy="161.2" r="5.8"/><circle cx="680.7" cy="191.9" r="5.8"/><circle cx="562.3" cy="152.0" r="5.8"/><circle cx="655.5" cy="111.6" r="5.8"/><circle cx="612.4" cy="114.0" r="5.8"/><circle cx="654.2" cy="104.5" r="5.8"/><circle cx="598.8" cy="203.2" r="5.8"/><circle cx="639.3" cy="150.9" r="5.8"/><circle cx="640.4" cy="176.3" r="5.8"/><circle cx="613.1" cy="124.2" r="5.8"/><circle cx="608.4" cy="155.3" r="5.8"/><circle cx="650.9" cy="130.7" r="5.8"/><circle cx="615.1" cy="95.9" r="5.8"/><circle cx="629.9" cy="101.7" r="5.8"/><circle cx="648.9" cy="166.9" r="5.8"/><circle cx="611.0" cy="101.6" r="5.8"/><circle cx="651.8" cy="113.6" r="5.8"/><circle cx="613.3" cy="189.2" r="5.8"/><circle cx="640.1" cy="108.9" r="5.8"/><circle cx="684.3" cy="178.3" r="5.8"/><circle cx="619.7" cy="172.8" r="5.8"/><circle cx="621.6" cy="102.5" r="5.8"/><circle cx="609.3" cy="167.4" r="5.8"/><circle cx="624.6" cy="182.6" r="5.8"/><circle cx="644.3" cy="182.6" r="5.8"/><circle cx="608.9" cy="102.0" r="5.8"/><circle cx="640.0" cy="321.0" r="5.8"/><circle cx="642.2" cy="216.0" r="5.8"/><circle cx="668.0" cy="148.8" r="5.8"/><circle cx="602.9" cy="172.0" r="5.8"/><circle cx="620.2" cy="152.1" r="5.8"/><circle cx="581.6" cy="158.3" r="5.8"/><circle cx="623.8" cy="186.7" r="5.8"/><circle cx="639.4" cy="111.3" r="5.8"/><circle cx="600.9" cy="208.3" r="5.8"/><circle cx="614.1" cy="98.6" r="5.8"/><circle cx="632.0" cy="141.1" r="5.8"/><circle cx="615.2" cy="156.6" r="5.8"/><circle cx="674.9" cy="140.1" r="5.8"/><circle cx="632.8" cy="151.7" r="5.8"/><circle cx="653.7" cy="99.7" r="5.8"/><circle cx="595.1" cy="124.9" r="5.8"/><circle cx="618.7" cy="190.5" r="5.8"/><circle cx="643.4" cy="128.5" r="5.8"/><circle cx="620.6" cy="129.8" r="5.8"/><circle cx="629.3" cy="185.2" r="5.8"/><circle cx="621.5" cy="232.7" r="5.8"/><circle cx="620.9" cy="121.3" r="5.8"/><circle cx="574.4" cy="167.5" r="5.8"/><circle cx="656.0" cy="179.8" r="5.8"/><circle cx="622.3" cy="164.6" r="5.8"/><circle cx="623.4" cy="173.9" r="5.8"/><circle cx="651.0" cy="167.2" r="5.8"/><circle cx="586.0" cy="219.6" r="5.8"/><circle cx="662.4" cy="178.4" r="5.8"/><circle cx="633.6" cy="110.4" r="5.8"/><circle cx="605.3" cy="113.3" r="5.8"/></g>
</svg>
<div class="a" style="left:811px;top:0;width:314px;height:22.5px;background:rgba(255,255,255,.55);"></div>
<div class="a" style="left:1081.5px;top:247px;width:34.5px;height:84px;background:#fff;border-radius:4px;box-shadow:0 0 0 2px rgba(0,0,0,.1);"></div>
<div class="a" style="left:1081.5px;top:289.5px;width:34.5px;height:1px;background:#ddd;"></div>
<svg class="a" style="left:1081.5px;top:247px" width="35" height="84"><path d="M11 18h13M17.5 11.5v13M11.2 60.5h12.6" stroke="#333" stroke-width="2.6" fill="none"/></svg>
<svg class="a" style="left:8px;top:309px" width="102" height="26" viewBox="0 0 102 26"><circle cx="12" cy="13" r="10.5" fill="#fff" fill-opacity=".9" stroke="#9a9a9a" stroke-width="2.4"/><circle cx="12" cy="13" r="7" fill="#9a9a9a"/><path d="M7.5 17.5 C9 12 13 8.5 17 8.5 C16.5 13 13 17 7.5 17.5Z" fill="#fff"/><circle cx="13.2" cy="12" r="1.6" fill="#9a9a9a"/><text x="25" y="19.5" font-size="19" font-weight="700" fill="#fff" stroke="#8f8f8f" stroke-width="2.6" paint-order="stroke" stroke-linejoin="round" textLength="73" lengthAdjust="spacingAndGlyphs">mapbox</text></svg>
<!-- boundary tools -->
<div class="a" style="left:9.5px;top:9px;width:31px;height:31px;background:#f9614d;"></div>
<svg class="a" style="left:9.5px;top:9px" width="31" height="31" viewBox="0 0 31 31"><path d="M8.5 6.5 L8.5 23 L12.8 19.2 L15.6 25.4 L18.2 24.2 L15.4 18.2 L21 17.6 Z" fill="none" stroke="#fff" stroke-opacity=".85" stroke-width="1.3" stroke-linejoin="round"/></svg>
<div class="a" style="left:45px;top:9px;width:142.5px;height:31px;background:#fff;"></div>
<svg class="a" style="left:48px;top:12px" width="26" height="26" viewBox="0 0 26 26"><g fill="#fff" stroke="#f9614d" stroke-width="1.4"><path d="M13 4.2 L21.8 10.6 L18.4 21 L7.6 21 L4.2 10.6 Z" stroke-linejoin="round"/><circle cx="13" cy="4.2" r="1.9"/><circle cx="21.8" cy="10.6" r="1.9"/><circle cx="18.4" cy="21" r="1.9"/><circle cx="7.6" cy="21" r="1.9"/><circle cx="4.2" cy="10.6" r="1.9"/></g></svg>
</div>

<div class="a" style="left:475px;top:487px;width:1125px;height:58px;background:#fff;"></div><div class="row" style="top:544px;height:106px"></div><div class="row" style="top:649px;height:106px"></div><div class="row" style="top:754px;height:106px"></div><div class="ic" style="left:1418px;top:574.2px"><svg width="35" height="35" viewBox="0 0 35 35"><path d="M11.2 10.2 C12.2 9 13.4 8.8 14.2 10 L15.8 12.6 C16.4 13.6 16 14.4 15.2 15 C14.4 15.7 14.6 16.6 15.6 18 C16.8 19.6 18.2 20.9 19.6 21.6 C20.6 22.1 21.2 21.6 21.8 20.9 C22.5 20.1 23.4 20 24.2 20.6 L26.4 22.3 C27.4 23.1 27.2 24.3 26.2 25.2 C24.4 26.8 21.6 26.4 18.4 24.2 C15 21.8 12.2 18.4 10.8 15.4 C9.8 13.2 10 11.4 11.2 10.2 Z" fill="#fff"/><path d="M19 12.6 C21.4 12.8 23 14.4 23.2 16.8 M19.4 8.8 C23.6 9.2 26.6 12.2 27 16.4" fill="none" stroke="#fff" stroke-width="1.6" stroke-linecap="round"/></svg></div><div class="ic" style="left:1458.5px;top:574.2px"><svg width="35" height="35" viewBox="0 0 35 35"><rect x="8.6" y="11.3" width="18" height="11.8" rx="2.6" fill="#fff"/><path d="M9.6 12.6 L17.6 18.2 L25.6 12.6" fill="none" stroke="#29b5e1" stroke-width="1.7" stroke-linejoin="round" stroke-linecap="round"/></svg></div><div class="ic" style="left:1418px;top:784.7px"><svg width="35" height="35" viewBox="0 0 35 35"><path d="M11.2 10.2 C12.2 9 13.4 8.8 14.2 10 L15.8 12.6 C16.4 13.6 16 14.4 15.2 15 C14.4 15.7 14.6 16.6 15.6 18 C16.8 19.6 18.2 20.9 19.6 21.6 C20.6 22.1 21.2 21.6 21.8 20.9 C22.5 20.1 23.4 20 24.2 20.6 L26.4 22.3 C27.4 23.1 27.2 24.3 26.2 25.2 C24.4 26.8 21.6 26.4 18.4 24.2 C15 21.8 12.2 18.4 10.8 15.4 C9.8 13.2 10 11.4 11.2 10.2 Z" fill="#fff"/><path d="M19 12.6 C21.4 12.8 23 14.4 23.2 16.8 M19.4 8.8 C23.6 9.2 26.6 12.2 27 16.4" fill="none" stroke="#fff" stroke-width="1.6" stroke-linecap="round"/></svg></div><div class="ic" style="left:1458.5px;top:784.7px"><svg width="35" height="35" viewBox="0 0 35 35"><rect x="8.6" y="11.3" width="18" height="11.8" rx="2.6" fill="#fff"/><path d="M9.6 12.6 L17.6 18.2 L25.6 12.6" fill="none" stroke="#29b5e1" stroke-width="1.7" stroke-linejoin="round" stroke-linecap="round"/></svg></div><svg class="a" style="left:475px;top:545px" width="169" height="103" viewBox="0 0 169 103">
<defs><linearGradient id="sk1" x1="0" y1="0" x2="0.3" y2="1"><stop offset="0" stop-color="#6c9cd6"/><stop offset="1" stop-color="#a8c2e2"/></linearGradient>
<clipPath id="c1"><polygon points="126,0 169,0 169,24 133,50 133,58 126,66"/></clipPath>
<filter id="b1"><feGaussianBlur stdDeviation="0.5"/></filter></defs>
<rect width="169" height="103" fill="url(#sk1)"/>
<g filter="url(#b1)">
<polygon points="63,0 127,0 127,103 17.5,103 17.5,83 13,79" fill="#3d2829"/>
<g stroke="#7a4a45" stroke-width="1.4" opacity=".6"><line x1="22.0" y1="103" x2="22.0" y2="68.4"/><line x1="27.0" y1="103" x2="27.0" y2="60.5"/><line x1="32.0" y1="103" x2="32.0" y2="52.5"/><line x1="37.0" y1="103" x2="37.0" y2="44.5"/><line x1="42.0" y1="103" x2="42.0" y2="36.5"/><line x1="47.0" y1="103" x2="47.0" y2="28.5"/><line x1="52.0" y1="103" x2="52.0" y2="20.6"/><line x1="57.0" y1="103" x2="57.0" y2="12.6"/><line x1="62.0" y1="103" x2="62.0" y2="4.6"/><line x1="67.0" y1="103" x2="67.0" y2="3.0"/><line x1="72.0" y1="103" x2="72.0" y2="3.0"/><line x1="77.0" y1="103" x2="77.0" y2="3.0"/><line x1="82.0" y1="103" x2="82.0" y2="3.0"/><line x1="87.0" y1="103" x2="87.0" y2="3.0"/><line x1="92.0" y1="103" x2="92.0" y2="3.0"/><line x1="97.0" y1="103" x2="97.0" y2="3.0"/><line x1="102.0" y1="103" x2="102.0" y2="3.0"/><line x1="107.0" y1="103" x2="107.0" y2="3.0"/><line x1="112.0" y1="103" x2="112.0" y2="3.0"/><line x1="117.0" y1="103" x2="117.0" y2="3.0"/><line x1="122.0" y1="103" x2="122.0" y2="3.0"/><line x1="127.0" y1="103" x2="127.0" y2="3.0"/></g>
<g stroke="#2a1a1c" stroke-width=".8" opacity=".7"><line x1="58" y1="8" x2="20" y2="68"/><line x1="126" y1="18" x2="18" y2="92"/><line x1="126" y1="36" x2="60" y2="103"/><line x1="126" y1="8" x2="24" y2="78"/><line x1="126" y1="28" x2="30" y2="103"/><line x1="126" y1="48" x2="84" y2="103"/></g>
<polygon points="63,0 66,0 15.5,80.5 13,79" fill="#2a2224"/>
<polygon points="92,103 100,62 126,58 126,66 144,70 144,103" fill="#1b181c"/>
<polygon points="84,0 126,0 126,60 98,64 92,80" fill="#1c1416" opacity=".45"/>
<polygon points="126,0 169,0 169,60 144,70 126,66" fill="#c9725a"/>
<g fill="#ead3c6" clip-path="url(#c1)"><rect x="133.0" y="1.0" width="6.5" height="6" /><rect x="143.5" y="1.0" width="6.5" height="6" /><rect x="154.0" y="1.0" width="6.5" height="6" /><rect x="164.5" y="1.0" width="6.5" height="6" /><rect x="133.0" y="11.5" width="6.5" height="6" /><rect x="143.5" y="11.5" width="6.5" height="6" /><rect x="154.0" y="11.5" width="6.5" height="6" /><rect x="164.5" y="11.5" width="6.5" height="6" /><rect x="133.0" y="22.0" width="6.5" height="6" /><rect x="143.5" y="22.0" width="6.5" height="6" /><rect x="154.0" y="22.0" width="6.5" height="6" /><rect x="164.5" y="22.0" width="6.5" height="6" /><rect x="133.0" y="32.5" width="6.5" height="6" /><rect x="143.5" y="32.5" width="6.5" height="6" /><rect x="154.0" y="32.5" width="6.5" height="6" /><rect x="164.5" y="32.5" width="6.5" height="6" /><rect x="133.0" y="43.0" width="6.5" height="6" /><rect x="143.5" y="43.0" width="6.5" height="6" /><rect x="154.0" y="43.0" width="6.5" height="6" /><rect x="164.5" y="43.0" width="6.5" height="6" /><rect x="133.0" y="53.5" width="6.5" height="6" /><rect x="143.5" y="53.5" width="6.5" height="6" /><rect x="154.0" y="53.5" width="6.5" height="6" /><rect x="164.5" y="53.5" width="6.5" height="6" /></g>
<rect x="124" y="0" width="3.5" height="66" fill="#a85844"/>
<polygon points="133,50 169,24 169,103 144,103 144,58" fill="#6a6670"/>
<polygon points="133,50 169,24 169,29 134,54" fill="#8a7f80"/>
<g fill="#8e8a94"><polygon points="148,62 169,52 169,56 148,66"/><polygon points="148,80 169,72 169,76 148,84"/><polygon points="148,97 169,90 169,94 148,101"/></g>
<g fill="#2c3340"><polygon points="150,68 169,60 169,70 150,78"/><polygon points="150,86 169,79 169,88 150,95"/></g>
<polygon points="131,70 144,72 144,84 131,82" fill="#58779f"/>
</g></svg><svg class="a" style="left:475px;top:650px" width="169" height="104" viewBox="0 0 169 104">
<defs><filter id="b2"><feGaussianBlur stdDeviation="0.6"/></filter>
<linearGradient id="g2" x1="0" y1="0" x2="0" y2="1"><stop offset="0" stop-color="#7f7f7d"/><stop offset="1" stop-color="#9a9995"/></linearGradient></defs>
<rect width="169" height="104" fill="url(#g2)"/>
<g filter="url(#b2)">
<polygon points="0,0 62,0 40,30 0,34" fill="#b4b4b2"/>
<polygon points="169,0 92,0 118,40 169,36" fill="#a9a9a7"/>
<polygon points="169,0 140,0 169,22" fill="#f1f1f1"/>
<polygon points="0,0 20,0 0,8" fill="#ececec"/>
<g fill="#3a3b3c"><polygon points="0.0,28.0 45.0,36.0 46.0,40.0 0.0,33.0"/><polygon points="4.4,23.2 48.6,30.0 49.6,33.6 4.4,27.8"/><polygon points="8.8,18.4 52.2,24.0 53.2,27.2 8.8,22.6"/><polygon points="13.2,13.6 55.8,18.0 56.8,20.8 13.2,17.4"/><polygon points="17.6,8.8 59.4,12.0 60.4,14.4 17.6,12.2"/><polygon points="22.0,4.0 63.0,6.0 64.0,8.0 22.0,7.0"/><polygon points="169.0,28.0 124.0,36.0 123.0,40.0 169.0,33.0"/><polygon points="164.6,23.2 120.4,30.0 119.4,33.6 164.6,27.8"/><polygon points="160.2,18.4 116.8,24.0 115.8,27.2 160.2,22.6"/><polygon points="155.8,13.6 113.2,18.0 112.2,20.8 155.8,17.4"/><polygon points="151.4,8.8 109.6,12.0 108.6,14.4 151.4,12.2"/><polygon points="147.0,4.0 106.0,6.0 105.0,8.0 147.0,7.0"/></g>
<g fill="#f4f4f2"><polygon points="27,26 34,21 48,29 42,36"/><polygon points="32,20 38,15 50,22 45,28"/><polygon points="110,26 122,21 128,27 116,33"/><polygon points="114,34 130,27 136,33 120,40"/></g>
<polygon points="0,30 42,38 40,46 0,48" fill="#b9b4ad"/>
<polygon points="169,30 122,44 126,52 169,56" fill="#9b9790"/>
<polygon points="0,50 24,50 10,78 0,78" fill="#55564f"/>
<polygon points="169,56 134,54 152,84 169,86" fill="#5d5c50"/>
<polygon points="62,0 92,0 162,86 0,86 " fill="#8f8f8c" opacity=".55"/>
<g fill="#2b2c2c"><rect x="75" y="1" width="9" height="2"/><rect x="74.5" y="6" width="10" height="4"/><rect x="73.5" y="14" width="11.5" height="6"/><polygon points="72,24 87,24 88.5,39 70.5,39"/><polygon points="68,52 93,52 100,87 63,87"/></g>
<rect x="69" y="78" width="22" height="6" fill="#8e9aa0"/>
<rect x="0" y="86" width="169" height="18" fill="#b3a396"/>
<rect x="0" y="85" width="169" height="2" fill="#c2c2c0"/>
<text x="12" y="104" font-family="Liberation Sans, sans-serif" font-size="13" font-weight="700" font-style="italic" fill="#5a4f48" textLength="146" lengthAdjust="spacingAndGlyphs" opacity=".75">MONADNOCK</text>
</g></svg><svg class="a" style="left:475px;top:755px" width="169" height="73" viewBox="0 0 169 73">
<defs><filter id="b3"><feGaussianBlur stdDeviation="0.55"/></filter>
<linearGradient id="sk3" x1="0" y1="0" x2="0" y2="1"><stop offset="0" stop-color="#5a8dca"/><stop offset=".6" stop-color="#8fb3dc"/><stop offset="1" stop-color="#a9c4e2"/></linearGradient></defs>
<rect width="169" height="73" fill="url(#sk3)"/>
<g filter="url(#b3)">
<path d="M0 42 C8 38 14 42 20 40 C28 36 36 40 44 42 L44 73 L0 73 Z" fill="#46553a"/>
<path d="M140 40 C150 36 160 38 169 36 L169 73 L140 73 Z" fill="#56653f"/>
<polygon points="146,46 169,42 169,64 150,62" fill="#7d8596"/>
<polygon points="14,73 22,52 44,50 72,70 169,66 169,73" fill="#77756e"/><polygon points="100,56 150,50 169,60 169,73 90,73" fill="#4e5645"/>
<polygon points="0,73 0,50 16,54 20,62 14,73" fill="#485636"/>
<polygon points="43.3,28.7 69.7,2.8 69.7,69 43.3,51" fill="#52627a"/>
<g stroke="#8c9196" stroke-width="1.6"><line x1="43.3" y1="34" x2="69.7" y2="17"/><line x1="43.3" y1="40" x2="69.7" y2="31"/><line x1="43.3" y1="45.5" x2="69.7" y2="45"/></g>
<polygon points="43.3,47 69.7,50 69.7,58 43.3,52" fill="#a9a493"/>
<polygon points="43.3,52 69.7,58 69.7,69 44,54" fill="#3b3f42"/>
<polygon points="69.7,2.2 117,10.7 117,58 71.4,71.4 69.7,69" fill="#c9c1ad"/>
<polygon points="76,59 92,56 92,66 76,69" fill="#34383a"/>
<polygon points="94,54 112,50 112,62 94,65" fill="#4a4a48"/>
<ellipse cx="129" cy="47" rx="19" ry="17" fill="#58743f"/>
<ellipse cx="118" cy="52" rx="11" ry="10" fill="#4b6b2c"/>
<ellipse cx="136" cy="40" rx="10" ry="8" fill="#6a874b"/>
<ellipse cx="110" cy="62" rx="10" ry="7" fill="#465f2f"/>
<rect x="121" y="62" width="3" height="11" fill="#3c3a30"/>
<path d="M9 73 L12 70 L26 69 L29 73 Z" fill="#f2f2f2"/>
<path d="M124 73 L126 69 L138 68 L140 73 Z" fill="#b9bcc0"/>
</g></svg>
<span class="t" style="left:20.0px;top:104.7px;font-size:21px;line-height:21px;color:#ffffff;letter-spacing:0.37px;">Explore:</span>
<span class="t" style="left:117.0px;top:104.7px;font-size:21px;line-height:21px;color:#ffffff;font-weight:700;letter-spacing:-0.26px;">Chicago</span>
<span class="t" style="left:388.4px;top:109.7px;font-size:16px;line-height:16px;color:#e6ecf4;font-style:italic;letter-spacing:0.36px;">Search by address</span>
<span class="t" style="left:1398.0px;top:108.5px;font-size:16px;line-height:16px;color:#ffffff;font-weight:700;letter-spacing:0.29px;">CREATE PROJECT</span>
<span class="t" style="left:1316.0px;top:38.8px;font-size:11.5px;line-height:11.5px;color:#b9b9b9;letter-spacing:0.39px;">Powered by</span>
<span class="t" style="left:1406.0px;top:35.6px;font-size:17px;line-height:17px;color:#c2c2c2;letter-spacing:-0.07px;">truss</span>
<span class="t" style="left:23.0px;top:166.6px;font-size:27px;line-height:27px;color:#111111;letter-spacing:1.07px;">11,384 Spaces</span>
<span class="t" style="left:61.0px;top:223.0px;font-size:16px;line-height:16px;color:#3ba7d4;letter-spacing:0.41px;">FOCUS YOUR SEARCH</span>
<span class="t" style="left:55.0px;top:286.3px;font-size:15px;line-height:15px;color:#111111;font-weight:700;letter-spacing:-0.11px;">Lease</span>
<span class="t" style="left:42.0px;top:327.5px;font-size:16px;line-height:16px;color:#1a1a1a;letter-spacing:0.22px;">Size</span>
<span class="t" style="left:137.0px;top:327.0px;font-size:16px;line-height:16px;color:#6d767a;letter-spacing:0.81px;">Any</span>
<span class="t" style="left:252.0px;top:327.0px;font-size:16px;line-height:16px;color:#1a1a1a;letter-spacing:1.33px;">to</span>
<span class="t" style="left:287.0px;top:327.0px;font-size:16px;line-height:16px;color:#6d767a;letter-spacing:0.81px;">Any</span>
<span class="t" style="left:59.4px;top:467.8px;font-size:11.5px;line-height:11.5px;color:#6d767a;transform:translateX(-50%);">0</span>
<span class="t" style="left:104.1px;top:467.8px;font-size:11.5px;line-height:11.5px;color:#6d767a;transform:translateX(-50%);">1,250</span>
<span class="t" style="left:148.8px;top:467.8px;font-size:11.5px;line-height:11.5px;color:#6d767a;transform:translateX(-50%);">2,500</span>
<span class="t" style="left:193.5px;top:467.8px;font-size:11.5px;line-height:11.5px;color:#6d767a;transform:translateX(-50%);">3,750</span>
<span class="t" style="left:238.2px;top:467.8px;font-size:11.5px;line-height:11.5px;color:#6d767a;transform:translateX(-50%);">7,000</span>
<span class="t" style="left:282.9px;top:467.8px;font-size:11.5px;line-height:11.5px;color:#6d767a;transform:translateX(-50%);">14,000</span>
<span class="t" style="left:327.6px;top:467.8px;font-size:11.5px;line-height:11.5px;color:#6d767a;transform:translateX(-50%);">25,000</span>
<span class="t" style="left:372.3px;top:467.8px;font-size:11.5px;line-height:11.5px;color:#6d767a;transform:translateX(-50%);">45,000</span>
<span class="t" style="left:58.8px;top:718.8px;font-size:11.5px;line-height:11.5px;color:#6d767a;transform:translateX(-50%);">0</span>
<span class="t" style="left:135.8px;top:718.8px;font-size:11.5px;line-height:11.5px;color:#6d767a;transform:translateX(-50%);">2,500</span>
<span class="t" style="left:212.7px;top:718.8px;font-size:11.5px;line-height:11.5px;color:#6d767a;transform:translateX(-50%);">9,000</span>
<span class="t" style="left:289.6px;top:718.8px;font-size:11.5px;line-height:11.5px;color:#6d767a;transform:translateX(-50%);">30,000</span>
<span class="t" style="left:367.0px;top:718.8px;font-size:11.5px;line-height:11.5px;color:#6d767a;transform:translateX(-50%);">150,000</span>
<span class="t" style="left:42.0px;top:516.0px;font-size:16px;line-height:16px;color:#1a1a1a;letter-spacing:0.55px;">Rent</span>
<span class="t" style="left:137.0px;top:515.0px;font-size:16px;line-height:16px;color:#1a1a1a;letter-spacing:0.95px;">All-in rent per month</span>
<span class="t" style="left:42.0px;top:579.5px;font-size:16px;line-height:16px;color:#1a1a1a;letter-spacing:0.37px;">Range</span>
<span class="t" style="left:137.0px;top:578.5px;font-size:16px;line-height:16px;color:#6d767a;letter-spacing:0.81px;">Any</span>
<span class="t" style="left:252.0px;top:578.5px;font-size:16px;line-height:16px;color:#1a1a1a;letter-spacing:1.33px;">to</span>
<span class="t" style="left:287.0px;top:578.5px;font-size:16px;line-height:16px;color:#6d767a;letter-spacing:0.81px;">Any</span>
<span class="t" style="left:42.0px;top:767.0px;font-size:16px;line-height:16px;color:#1a1a1a;letter-spacing:0.83px;">Type</span>
<span class="t" style="left:156.0px;top:766.0px;font-size:16px;line-height:16px;color:#7d868a;letter-spacing:1.04px;">Direct</span>
<span class="t" style="left:245.0px;top:766.0px;font-size:16px;line-height:16px;color:#7d868a;letter-spacing:0.54px;">Sublease</span>
<span class="t" style="left:370.5px;top:765.5px;font-size:16.5px;line-height:16.5px;color:#ffffff;font-weight:700;letter-spacing:-0.03px;">All</span>
<span class="t" style="left:42.0px;top:811.0px;font-size:16px;line-height:16px;color:#1a1a1a;letter-spacing:0.71px;">Available</span>
<span class="t" style="left:554.7px;top:161.2px;font-size:14.5px;line-height:14.5px;color:#f9614d;font-weight:700;letter-spacing:-0.35px;">New Boundary</span>
<span class="t" style="left:1291.0px;top:149.2px;font-size:13.5px;line-height:13.5px;color:#444444;letter-spacing:0.40px;">© Mapbox © OpenStreetMap</span>
<span class="t" style="left:1482.0px;top:149.2px;font-size:13.5px;line-height:13.5px;color:#3c3c3c;font-weight:700;letter-spacing:0.14px;">Improve this map</span>
<span class="t" style="left:656.0px;top:506.5px;font-size:16px;line-height:16px;color:#29b5e1;font-weight:700;">Spaces</span>
<span class="t" style="left:743.0px;top:506.5px;font-size:16px;line-height:16px;color:#6b7378;font-weight:700;">Address</span>
<span class="t" style="left:936.0px;top:506.5px;font-size:16px;line-height:16px;color:#29b5e1;font-weight:700;letter-spacing:0.25px;">Size</span>
<span class="t" style="left:1110.0px;top:506.5px;font-size:16px;line-height:16px;color:#29b5e1;font-weight:700;letter-spacing:0.25px;">Lease term</span>
<span class="t" style="left:1237.0px;top:506.5px;font-size:16px;line-height:16px;color:#29b5e1;font-weight:700;letter-spacing:0.30px;">All-in rent</span>
<span class="t" style="left:1419.0px;top:506.5px;font-size:16px;line-height:16px;color:#6b7378;font-weight:700;letter-spacing:0.78px;">Contact</span>
<span class="t" style="left:678.0px;top:551.7px;font-size:21px;line-height:21px;color:#111;font-weight:700;letter-spacing:0.32px;">12</span>
<span class="t" style="left:667.0px;top:573.6px;font-size:13.5px;line-height:13.5px;color:#1a1a1a;letter-spacing:0.54px;">spaces</span>
<span class="t" style="left:743.0px;top:554.0px;font-size:16px;line-height:16px;color:#111;font-weight:700;letter-spacing:0.22px;">Heyworth Building</span>
<span class="t" style="left:743.0px;top:572.5px;font-size:16px;line-height:16px;color:#1a1a1a;letter-spacing:0.71px;">29 E Madison St</span>
<span class="t" style="left:743.0px;top:591.2px;font-size:16px;line-height:16px;color:#1a1a1a;letter-spacing:0.63px;">Chicago, IL 60602</span>
<span class="t" style="left:936.0px;top:554.0px;font-size:16px;line-height:16px;color:#1a1a1a;letter-spacing:0.54px;">371–3,794 SF</span>
<span class="t" style="left:1110.0px;top:554.0px;font-size:16px;line-height:16px;color:#1a1a1a;letter-spacing:0.60px;">12–144</span>
<span class="t" style="left:1110.0px;top:572.5px;font-size:16px;line-height:16px;color:#1a1a1a;letter-spacing:1.17px;">months</span>
<span class="t" style="left:1237.5px;top:554.0px;font-size:16px;line-height:16px;color:#1a1a1a;letter-spacing:1.13px;">$804–$9,169 /mo</span>
<span class="t" style="left:678.0px;top:656.7px;font-size:21px;line-height:21px;color:#111;font-weight:700;letter-spacing:0.32px;">27</span>
<span class="t" style="left:667.0px;top:678.6px;font-size:13.5px;line-height:13.5px;color:#1a1a1a;letter-spacing:0.54px;">spaces</span>
<span class="t" style="left:743.0px;top:659.0px;font-size:16px;line-height:16px;color:#111;font-weight:700;letter-spacing:0.23px;">Monadnock</span>
<span class="t" style="left:743.0px;top:677.5px;font-size:16px;line-height:16px;color:#1a1a1a;letter-spacing:0.64px;">53 W Jackson Blvd</span>
<span class="t" style="left:743.0px;top:696.2px;font-size:16px;line-height:16px;color:#1a1a1a;letter-spacing:0.63px;">Chicago, IL 60604</span>
<span class="t" style="left:936.0px;top:659.0px;font-size:16px;line-height:16px;color:#1a1a1a;letter-spacing:0.54px;">308–1,919 SF</span>
<span class="t" style="left:1110.0px;top:659.0px;font-size:16px;line-height:16px;color:#1a1a1a;letter-spacing:0.60px;">24–120</span>
<span class="t" style="left:1110.0px;top:677.5px;font-size:16px;line-height:16px;color:#1a1a1a;letter-spacing:1.17px;">months</span>
<span class="t" style="left:1237.5px;top:659.0px;font-size:16px;line-height:16px;color:#1a1a1a;letter-spacing:1.13px;">$821–$5,277 /mo</span>
<span class="t" style="left:684.0px;top:761.7px;font-size:21px;line-height:21px;color:#111;font-weight:700;letter-spacing:0.31px;">8</span>
<span class="t" style="left:667.0px;top:783.6px;font-size:13.5px;line-height:13.5px;color:#1a1a1a;letter-spacing:0.54px;">spaces</span>
<span class="t" style="left:743.0px;top:764.0px;font-size:16px;line-height:16px;color:#111;font-weight:700;letter-spacing:0.14px;">1500 Skokie Blvd</span>
<span class="t" style="left:743.0px;top:782.5px;font-size:16px;line-height:16px;color:#1a1a1a;letter-spacing:0.86px;">Northbrook, IL 60062</span>
<span class="t" style="left:936.0px;top:764.0px;font-size:16px;line-height:16px;color:#1a1a1a;letter-spacing:0.54px;">428–2,353 SF</span>
<span class="t" style="left:1110.0px;top:764.0px;font-size:16px;line-height:16px;color:#1a1a1a;letter-spacing:0.60px;">24–120</span>
<span class="t" style="left:1110.0px;top:782.5px;font-size:16px;line-height:16px;color:#1a1a1a;letter-spacing:1.17px;">months</span>
<span class="t" style="left:1237.5px;top:764.0px;font-size:16px;line-height:16px;color:#1a1a1a;letter-spacing:1.13px;">$825–$3,749 /mo</span>
<span class="t" style="left:1417.0px;top:554.8px;font-size:15px;line-height:15px;color:#111;font-weight:700;letter-spacing:0.22px;">Jane Doe</span>
<span class="t" style="left:1418.5px;top:630.0px;font-size:16px;line-height:16px;color:#1a1a1a;letter-spacing:1.06px;">Additional contacts</span>
<span class="t" style="left:1418.5px;top:659.0px;font-size:16px;line-height:16px;color:#1a1a1a;letter-spacing:0.92px;">Multiple landlords</span>
<span class="t" style="left:1418.5px;top:678.0px;font-size:16px;line-height:16px;color:#1a1a1a;letter-spacing:0.69px;">manage spaces</span>
<span class="t" style="left:1417.0px;top:765.3px;font-size:15px;line-height:15px;color:#111;font-weight:700;letter-spacing:0.22px;">Jane Doe</span>
</body></html>
